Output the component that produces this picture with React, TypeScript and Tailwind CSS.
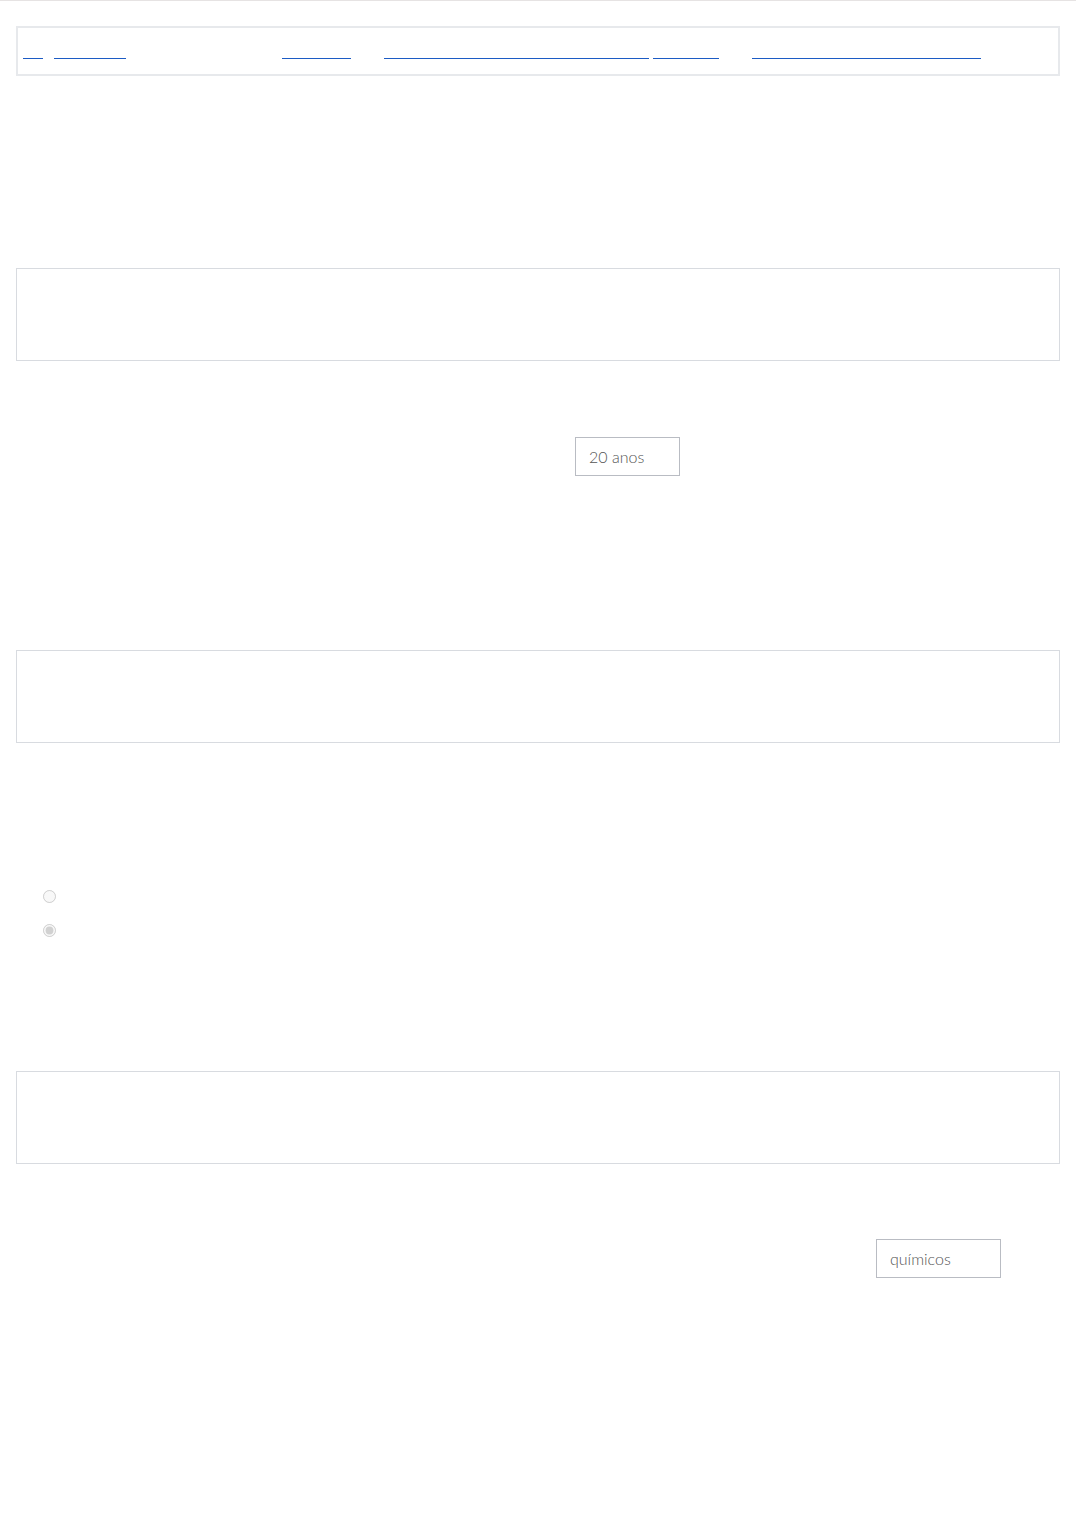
const navLinks = [
  { label: "Início", w: "w-[20px]", ml: "ml-[5px]", size: "text-[6px]" },
  { label: "Disciplinas", w: "w-[72px]", ml: "ml-[11px]", size: "text-[11px]" },
  { label: "Conteúdos", w: "w-[69px]", ml: "ml-[156px]", size: "text-[11px]" },
  { label: "Exercícios de química para o ensino médio", w: "w-[265px]", ml: "ml-[33px]", size: "text-[11px]" },
  { label: "Simulados", w: "w-[66px]", ml: "ml-[4px]", size: "text-[11px]" },
  { label: "Lista de exercícios resolvidos", w: "w-[229px]", ml: "ml-[33px]", size: "text-[11px]" },
];

function QuestionBox({ mt }: { mt: string }) {
  return <div className={`${mt} h-[93px] border border-[#d8dbe0] bg-white`} />;
}

export default function App() {
  return (
    <div className="min-h-[1516px] bg-white border-t border-[#e6e3e3] font-['Lato',sans-serif]">
      <div className="px-4">
        {/* navegação */}
        <nav className="mt-[25px] h-[50px] border-2 border-[#e7e9ec] pt-[10px]">
          <div className="flex items-start">
            {navLinks.map((l) => (
              <a
                key={l.label}
                href="#"
                className={`${l.ml} ${l.w} ${l.size} block h-[21px] whitespace-nowrap border-b border-[#1c5bc4] leading-[20px] text-white`}
              >
                {l.label}
              </a>
            ))}
          </div>
        </nav>

        <QuestionBox mt="mt-[192px]" />

        <div className="mt-[76px] flex">
          <input
            type="text"
            readOnly
            value="20 anos"
            className="ml-[559px] h-[39px] w-[105px] border border-[#b9bcc3] bg-white pl-[13px] text-[16px] font-light text-[#555] outline-none"
          />
        </div>

        <QuestionBox mt="mt-[174px]" />

        {/* alternativas */}
        <div className="mt-[147px] flex flex-col gap-[21px] pl-[27px]">
          <input type="radio" name="alt" disabled className="m-0 h-[13px] w-[13px]" />
          <input type="radio" name="alt" disabled defaultChecked className="m-0 h-[13px] w-[13px]" />
        </div>

        <QuestionBox mt="mt-[134px]" />

        <div className="mt-[75px] flex">
          <input
            type="text"
            readOnly
            value="químicos"
            className="ml-[860px] h-[39px] w-[125px] border border-[#b9bcc3] bg-white pl-[13px] text-[16px] font-light text-[#555] outline-none"
          />
        </div>
      </div>
    </div>
  );
}
